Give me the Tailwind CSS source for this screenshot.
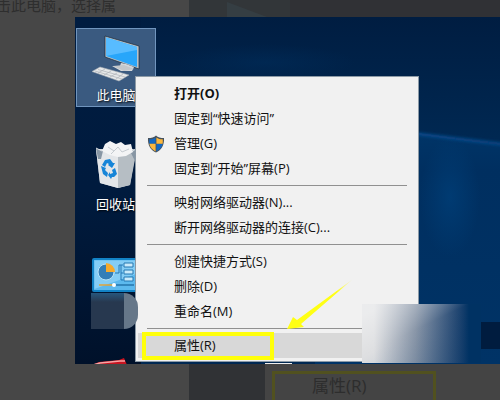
<!DOCTYPE html>
<html lang="zh-CN">
<head>
  <meta charset="UTF-8" />
  <meta name="viewport" content="width=device-width, initial-scale=1.0" />
  <title>此电脑 – 属性</title>
  <script src="https://cdn.jsdelivr.net/npm/@tailwindcss/browser@4"></script>
</head>
<body class="bg-[#474747] font-['Open_Sans','Noto_Sans_CJK_SC',sans-serif]">
<div class="flex flex-col h-screen overflow-hidden">

  <!-- 上方变暗的文章 -->
  <header class="flex h-[17px] shrink-0 overflow-hidden">
    <p class="w-[189px] shrink-0 flex items-center text-[15px] leading-4 text-[#2e2e2e] whitespace-nowrap"><span class="-ml-1 -mt-2">击此电脑，选择属</span></p>
    <div class="flex-1 bg-[#303135]">
      <svg class="block h-full" width="101" height="17" viewBox="0 0 101 17">
        <rect width="101" height="17" fill="#323639" />
        <path d="M38 2 L78 17 H38Z" fill="#353e43" />
      </svg>
    </div>
  </header>

  <!-- 桌面 -->
  <main class="relative ml-[75px] h-[347px] shrink-0 overflow-hidden bg-[#002550]">
    <!-- 壁纸 -->
    <svg class="absolute inset-0 w-full h-full" viewBox="0 0 425 347" preserveAspectRatio="none">
      <defs>
        <linearGradient id="sky" x1="0" y1="0" x2="0" y2="1">
          <stop offset="0" stop-color="#001d41" />
          <stop offset=".35" stop-color="#002852" />
        </linearGradient>
        <linearGradient id="floor" x1="0" y1="0" x2="0" y2="1">
          <stop offset="0" stop-color="#003669" />
          <stop offset=".2" stop-color="#002f60" />
          <stop offset="1" stop-color="#003366" />
        </linearGradient>
        <linearGradient id="side" x1="0" y1="0" x2="0" y2="1">
          <stop offset="0" stop-color="#001c40" />
          <stop offset=".5" stop-color="#001b3e" />
          <stop offset="1" stop-color="#00112a" />
        </linearGradient>
        <radialGradient id="glow">
          <stop offset="0" stop-color="#00407a" stop-opacity=".7" />
          <stop offset="1" stop-color="#00407a" stop-opacity="0" />
        </radialGradient>
        <filter id="soft" x="-10%" y="-100%" width="120%" height="300%"><feGaussianBlur stdDeviation="1.500" /></filter>
      </defs>
      <rect width="425" height="347" fill="url(#sky)" />
      <path d="M240 106 L345 116 L425 128 V347 H240Z" fill="url(#floor)" />
      <path d="M335 116 L435 128" stroke="#07488a" stroke-width="3" filter="url(#soft)" />
      <ellipse cx="375" cy="180" rx="30" ry="60" fill="url(#glow)" />
      <ellipse cx="190" cy="45" rx="90" ry="18" fill="url(#glow)" opacity=".3" />
      <rect width="66" height="347" fill="url(#side)" />
      <rect x="400" y="305" width="25" height="27" fill="#001c3f" />
    </svg>

    <!-- 桌面图标 -->
    <nav class="relative flex flex-col w-[81px] pt-[11px] text-[13px] leading-5 text-white">
      <button class="flex flex-col items-center h-[79px] ml-px pt-1 bg-[#3a5a80] border border-[#7095be]">
        <svg width="56" height="52" viewBox="0 0 56 52">
          <path d="M17 3 L51 13 V36 L17 24Z" fill="#b9c2c9" stroke="#1c2a38" stroke-width=".7" />
          <path d="M18 4.500 L49 14 V34 L18 23Z" fill="#28a6fa" />
          <path d="M18 4.500 L49 14 V17 L18 23Z" fill="#58bcff" />
          <path d="M33 30 L38 31 L46 34 L44 38 L33 38 L24 33 L32 33Z" fill="#d3d7da" />
          <path d="M25 33 L36 32 L46 36 L36 38Z" fill="#c2c7cb" />
          <path d="M12 34 L41 42 L31 48 L4 38.500Z" fill="#e6e8e9" stroke="#a6adb3" stroke-width=".6" />
          <path d="M10 36.500 L37 44 M7 38 L34 46 M17 36 L10 40 M23 38 L16 42 M29 40 L22 44 M35 41 L28 46" stroke="#adb2b7" stroke-width=".7" />
        </svg>
        <span class="[text-shadow:1px_1px_2px_black]">此电脑</span>
      </button>
      <button class="flex flex-col items-center mt-[30px]">
        <svg width="56" height="56" viewBox="0 0 56 56">
          <path d="M8 12 L48 12 L42 48 L30 51 L12 46Z" fill="#d4d9dd" />
          <path d="M30 16 L49 12 L42 48 L30 51Z" fill="#b6bec4" />
          <path d="M8 12 L30 17 V51 L12 46Z" fill="#e3e6e9" />
          <path d="M8 11 L15 14 L13 22 L10 22Z M42 14 L49 11 L47 24Z" fill="#8796a4" />
          <path d="M14 14 L17 7 L22 4 L28 7 L33 5 L37 8 L43 7 L45 15 L38 19 L30 20 L22 18Z" fill="#f3f4f5" />
          <path d="M20 10 L26 14 L30 10 L34 15 L41 12 M26 14 L23 17" fill="none" stroke="#c6ccd1" />
          <path d="M8 11 L14 14 M45 14 L49 11" fill="none" stroke="#f4f6f8" stroke-width=".8" />
          <path d="M17 23 L22 22 L25 26 L27 26 L24 31 L20 28 L21 27 L19 26 L17 30 L14 28Z" fill="#1685d8" />
          <path d="M13 29 L18 31 L17 33 L20 36 L19 40 L15 37Z" fill="#1685d8" />
          <path d="M22 37 L25 36 L24 33 L27 31 L29 37 L26 40 L24 40 L23 42 L20 38 L22 35Z" fill="#1685d8" />
        </svg>
        <span class="mt-px [text-shadow:1px_1px_2px_black]">回收站</span>
      </button>
      <button class="mt-[44px] ml-[17px] w-14" aria-label="控制面板">
        <svg class="block" width="56" height="34" viewBox="0 0 56 34">
          <rect x="1" y="1" width="54" height="32" rx="1" fill="#5cb9ee" stroke="#1283c6" stroke-width="2" />
          <path d="M2.500 2.500 H44 V16 L2.500 31Z" fill="#84cdf5" />
          <circle cx="14" cy="14" r="8" fill="#347eb7" stroke="#b8e2f7" />
          <path d="M14 14 V5 A9 9 0 0 1 23 14Z" fill="#f6aa2c" />
          <path d="M23 15 H27 V7 H31 M29 15 H31 M29 7 V22 H31" fill="none" stroke="#2579b5" />
          <path d="M32 5 H41 V9 H32Z M32 12 H41 V16 H32Z M32 19 H41 V23 H32Z" fill="#c9eafb" stroke="#2478b2" />
          <path d="M7 27 H22" stroke="#dfa33b" stroke-width="1.500" />
          <path d="M22 27 H42" stroke="#2576ac" stroke-width="1.500" />
          <circle cx="22" cy="27" r="2" fill="#fff" />
        </svg>
      </button>
      <svg class="mt-16 ml-4 shrink-0" width="56" height="24" viewBox="0 0 56 24">
        <path d="M1 9 L8 6 L28 4 L33 2 L36 9 V24 H1Z" fill="#c81420" />
        <path d="M2 9 L9 7 L29 5 L34 5" stroke="#f6a5a5" stroke-width="1.500" fill="none" />
      </svg>
    </nav>

    <!-- 右键菜单 -->
    <div role="menu" class="absolute left-[60px] top-[59px] w-[284px] flex flex-col px-0.5 pt-1 pb-[3px] bg-[#f1f1f1] border border-[#8c9aa6] text-[13px] text-[#111]">
      <button role="menuitem" class="h-[25px] pl-9 text-left font-bold">打开(O)</button>
      <button role="menuitem" class="h-[25px] pl-9 text-left">固定到“快速访问”</button>
      <button role="menuitem" class="flex items-center h-[25px] pl-[9px] gap-[9px] text-left">
        <svg width="18" height="18" viewBox="0 0 18 18">
          <path d="M9 .5 C11 2.500 13.500 3 17 3 C17.500 10 14.500 15 9 17.600 C3.500 15 .5 10 1 3 C4.500 3 7 2.500 9 .5Z" fill="#47525c" />
          <path d="M8.600 2.400 V8.800 H2.300 C2.100 7 2.200 5.500 2.300 4.200 C5 4.200 7 3.800 8.600 2.400Z M9.400 8.800 H15.700 C15 12.500 12.500 15 9.400 16.400Z" fill="#1268c3" />
          <path d="M9.400 2.400 C11 3.800 13 4.200 15.700 4.200 C15.800 5.500 15.900 7 15.700 8.800 H9.400Z M2.300 8.800 H8.600 V16.400 C5.500 15 3 12.500 2.300 8.800Z" fill="#fbb73c" />
        </svg>
        <span>管理(G)</span>
      </button>
      <button role="menuitem" class="h-[25px] pl-9 text-left">固定到“开始”屏幕(P)</button>
      <hr class="my-1 mx-[9px] border-[#909090]" />
      <button role="menuitem" class="h-[25px] pl-9 text-left">映射网络驱动器(N)...</button>
      <button role="menuitem" class="h-[25px] pl-9 text-left">断开网络驱动器的连接(C)...</button>
      <hr class="my-1 mx-[9px] border-[#909090]" />
      <button role="menuitem" class="h-[25px] pl-9 text-left">创建快捷方式(S)</button>
      <button role="menuitem" class="h-[25px] pl-9 text-left">删除(D)</button>
      <button role="menuitem" class="h-[25px] pl-9 text-left">重命名(M)</button>
      <hr class="my-1 mx-[9px] border-[#909090]" />
      <button role="menuitem" class="h-[25px] pl-9 text-left bg-[#d8d8d8]">属性(R)</button>
    </div>

    <!-- 标注：黄框、箭头、遮挡块 -->
    <div class="absolute left-[67px] top-[315px] w-[132px] h-7 border-4 border-[#ffff0a]"></div>
    <svg class="absolute left-[212px] top-[262px]" width="68" height="52" viewBox="0 0 68 52">
      <defs>
        <linearGradient id="tail" x1="0" y1="1" x2="1" y2="0">
          <stop offset=".75" stop-color="#ffff14" />
          <stop offset="1" stop-color="#ffff14" stop-opacity="0" />
        </linearGradient>
      </defs>
      <path d="M0 50 L6 38 L10 41 L66 0 L14 45 L17 48Z" fill="url(#tail)" />
    </svg>
    <div class="absolute left-4 top-[276px] flex h-9">
      <div class="w-[33px] bg-linear-to-b from-[#27577d] via-[#27384f] via-25% to-[#27384f]"></div>
      <div class="w-3.5 rounded-r-full bg-[#667789]"></div>
    </div>
    <div class="absolute left-[287px] top-[287px] w-[119px] h-[59px] bg-linear-to-r from-[#dedfe1] from-10% via-[#8996a8] via-45% to-[#003263] to-90%">
      <div class="h-full bg-linear-to-br from-white/40 from-10% via-transparent via-45% to-[#003263]/20"></div>
    </div>
    <div class="absolute left-[190px] bottom-0 w-[27px] h-px bg-[#eeeeee]"></div>
  </main>

  <!-- 下方变暗的文章 -->
  <footer class="flex flex-1 overflow-hidden">
    <div class="w-[189px] shrink-0"></div>
    <div class="w-[76px] shrink-0 bg-[#303235]"></div>
    <div class="flex-1 pl-[7px] pt-[7px] bg-[#444444]">
      <div class="w-[164px] h-10 pl-[37px] border-3 border-[#51511f] text-[17px] leading-6 text-[#2d2d2d]">属性(R)</div>
    </div>
  </footer>
</div>
</body>
</html>
